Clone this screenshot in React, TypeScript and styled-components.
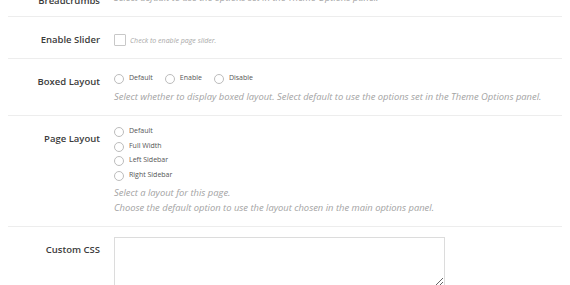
import React from 'react';
import styled, { createGlobalStyle } from 'styled-components';

const GlobalStyle = createGlobalStyle`
  html, body {
    margin: 0;
    padding: 0;
    background: #fff;
    overflow: hidden;
  }

  body {
    font-family: 'Open Sans', 'Liberation Sans', sans-serif;
  }
`;

const boxedOptions = ['Default', 'Enable', 'Disable'];
const layoutOptions = ['Default', 'Full Width', 'Left Sidebar', 'Right Sidebar'];

const App = () => {
  return (
    <>
      <GlobalStyle />
      <Panel>
        <Row>
          <Label>Breadcrumbs</Label>
          <Field>
            <Description $gap={3}>
              Select default to use the options set in the Theme Options panel.
            </Description>
          </Field>
        </Row>

        <Row>
          <Label>Enable Slider</Label>
          <Field>
            <CheckLine>
              <Checkbox type="checkbox" />
              <Hint>Check to enable page slider.</Hint>
            </CheckLine>
          </Field>
        </Row>

        <Row>
          <Label>Boxed Layout</Label>
          <Field>
            <InlineOptions>
              {boxedOptions.map((option) => (
                <Option key={option}>
                  <Radio type="radio" name="boxed" />
                  <OptionText>{option}</OptionText>
                </Option>
              ))}
            </InlineOptions>
            <Description $gap={3.5}>
              Select whether to display boxed layout. Select default to use the options set in the
              Theme Options panel.
            </Description>
          </Field>
        </Row>

        <Row>
          <Label>Page Layout</Label>
          <Field>
            <StackedOptions>
              {layoutOptions.map((option) => (
                <Option key={option}>
                  <Radio type="radio" name="layout" />
                  <OptionText>{option}</OptionText>
                </Option>
              ))}
            </StackedOptions>
            <Description $gap={1.5}>
              Select a layout for this page.
              <br />
              Choose the default option to use the layout chosen in the main options panel.
            </Description>
          </Field>
        </Row>

        <Row $last>
          <Label>Custom CSS</Label>
          <Field>
            <CssInput />
          </Field>
        </Row>
      </Panel>
    </>
  );
};

const Panel = styled.div`
  margin: -22px 8px 0;
`;

const Row = styled.div<{ $last?: boolean }>`
  display: grid;
  grid-template-columns: 92px 1fr;
  column-gap: 14px;
  padding: 9px 0;
  border-bottom: ${({ $last }) => ($last ? 'none' : '1px solid #ededed')};
`;

const Label = styled.div`
  text-align: right;
  font-size: 9.5px;
  font-weight: 600;
  line-height: 13px;
  padding-top: 7px;
  color: #3c3c3c;
`;

const Field = styled.div`
  display: flex;
  flex-direction: column;
  padding-bottom: 2px;
`;

const Description = styled.p<{ $gap: number }>`
  margin: ${({ $gap }) => $gap}px 0 0;
  font-size: 9.4px;
  font-style: italic;
  line-height: 15px;
  color: #a3a3a3;
`;

const CheckLine = styled.label`
  display: flex;
  align-items: center;
  gap: 4px;
  margin-top: 7px;
  height: 14px;
`;

const Checkbox = styled.input`
  appearance: none;
  margin: 0;
  width: 12px;
  height: 12px;
  border: 1px solid #c8c8c8;
  border-radius: 1px;
  background: #fff;
  box-sizing: border-box;
`;

const Hint = styled.span`
  font-size: 7px;
  font-style: italic;
  color: #a8a8a8;
`;

const InlineOptions = styled.div`
  display: flex;
  align-items: center;
  gap: 12px;
  height: 13px;
  margin-top: 4px;
`;

const StackedOptions = styled.div`
  display: flex;
  flex-direction: column;
`;

const Option = styled.label`
  display: flex;
  align-items: center;
  gap: 5px;
  height: 14.7px;
`;

const Radio = styled.input`
  appearance: none;
  margin: 0;
  width: 10px;
  height: 10px;
  border: 1px solid #bcbcbc;
  border-radius: 50%;
  background: #fff;
  box-sizing: border-box;
`;

const OptionText = styled.span`
  font-size: 7px;
  color: #555;
  margin-top: -3px;
`;

const CssInput = styled.textarea`
  width: 331px;
  height: 50px;
  margin: 1px 0 0;
  border: 1px solid #dcdcdc;
  border-radius: 0;
  box-sizing: border-box;
  background: #fff;
`;

export default App;
